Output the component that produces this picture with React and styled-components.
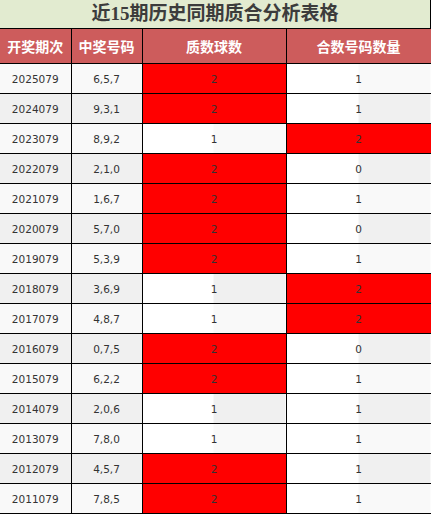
import React from 'react';
import styled, { createGlobalStyle } from 'styled-components';

const GlobalStyle = createGlobalStyle`
  html, body {
    margin: 0;
    padding: 0;
    background: #fff;
  }
`;

const rows = [
  ['2025079', '6,5,7', 2, 1],
  ['2024079', '9,3,1', 2, 1],
  ['2023079', '8,9,2', 1, 2],
  ['2022079', '2,1,0', 2, 0],
  ['2021079', '1,6,7', 2, 1],
  ['2020079', '5,7,0', 2, 0],
  ['2019079', '5,3,9', 2, 1],
  ['2018079', '3,6,9', 1, 2],
  ['2017079', '4,8,7', 1, 2],
  ['2016079', '0,7,5', 2, 0],
  ['2015079', '6,2,2', 2, 1],
  ['2014079', '2,0,6', 1, 1],
  ['2013079', '7,8,0', 1, 1],
  ['2012079', '4,5,7', 2, 1],
  ['2011079', '7,8,5', 2, 1],
];

const Wrap = styled.div`
  width: 431px;
`;

const Title = styled.div`
  height: 28px;
  border-right: 1px solid #000;
  border-bottom: 1px solid #000;
  background: #e2ebd0;
  color: #3c3c3c;
  font-family: "Liberation Serif", "Noto Sans CJK SC", serif;
  font-weight: bold;
  font-size: 19px;
  line-height: 28px;
  text-align: center;
`;

const Table = styled.table`
  width: 431px;
  border-collapse: collapse;
  table-layout: fixed;
`;

const Head = styled.th`
  height: 34px;
  padding: 0;
  background: #cd5c5c;
  color: #fff;
  font-family: "Noto Sans CJK SC", sans-serif;
  font-weight: bold;
  font-size: 14px;
  border-right: 1px solid #000;
  border-bottom: 1px solid #000;
  text-align: center;
`;

const Cell = styled.td`
  height: 29px;
  padding: 0;
  border-right: 1px solid #000;
  border-bottom: 1px solid #000;
  text-align: center;
  color: #333;
  font-family: "DejaVu Sans", sans-serif;
  font-size: 10.5px;
  background: ${({ $hot, $half, $stripe }) =>
    $hot
      ? '#ff0000'
      : $half
      ? `linear-gradient(to right, #fff 50%, ${$stripe} 50%)`
      : $stripe};
`;

export default function App() {
  return (
    <Wrap>
      <GlobalStyle />
      <Title>近15期历史同期质合分析表格</Title>
      <Table>
        <colgroup>
          <col style={{ width: 71 }} />
          <col style={{ width: 71 }} />
          <col style={{ width: 144 }} />
          <col style={{ width: 145 }} />
        </colgroup>
        <thead>
          <tr>
            <Head>开奖期次</Head>
            <Head>中奖号码</Head>
            <Head>质数球数</Head>
            <Head>合数号码数量</Head>
          </tr>
        </thead>
        <tbody>
          {rows.map(([issue, nums, prime, comp], i) => {
            const stripe = i % 2 === 0 ? '#f9f9f9' : '#f0f0f0';
            return (
              <tr key={issue}>
                <Cell $stripe={stripe}>{issue}</Cell>
                <Cell $stripe={stripe}>{nums}</Cell>
                <Cell $stripe={stripe} $half $hot={prime === 2}>{prime}</Cell>
                <Cell $stripe={stripe} $half $hot={comp === 2}>{comp}</Cell>
              </tr>
            );
          })}
        </tbody>
      </Table>
    </Wrap>
  );
}
